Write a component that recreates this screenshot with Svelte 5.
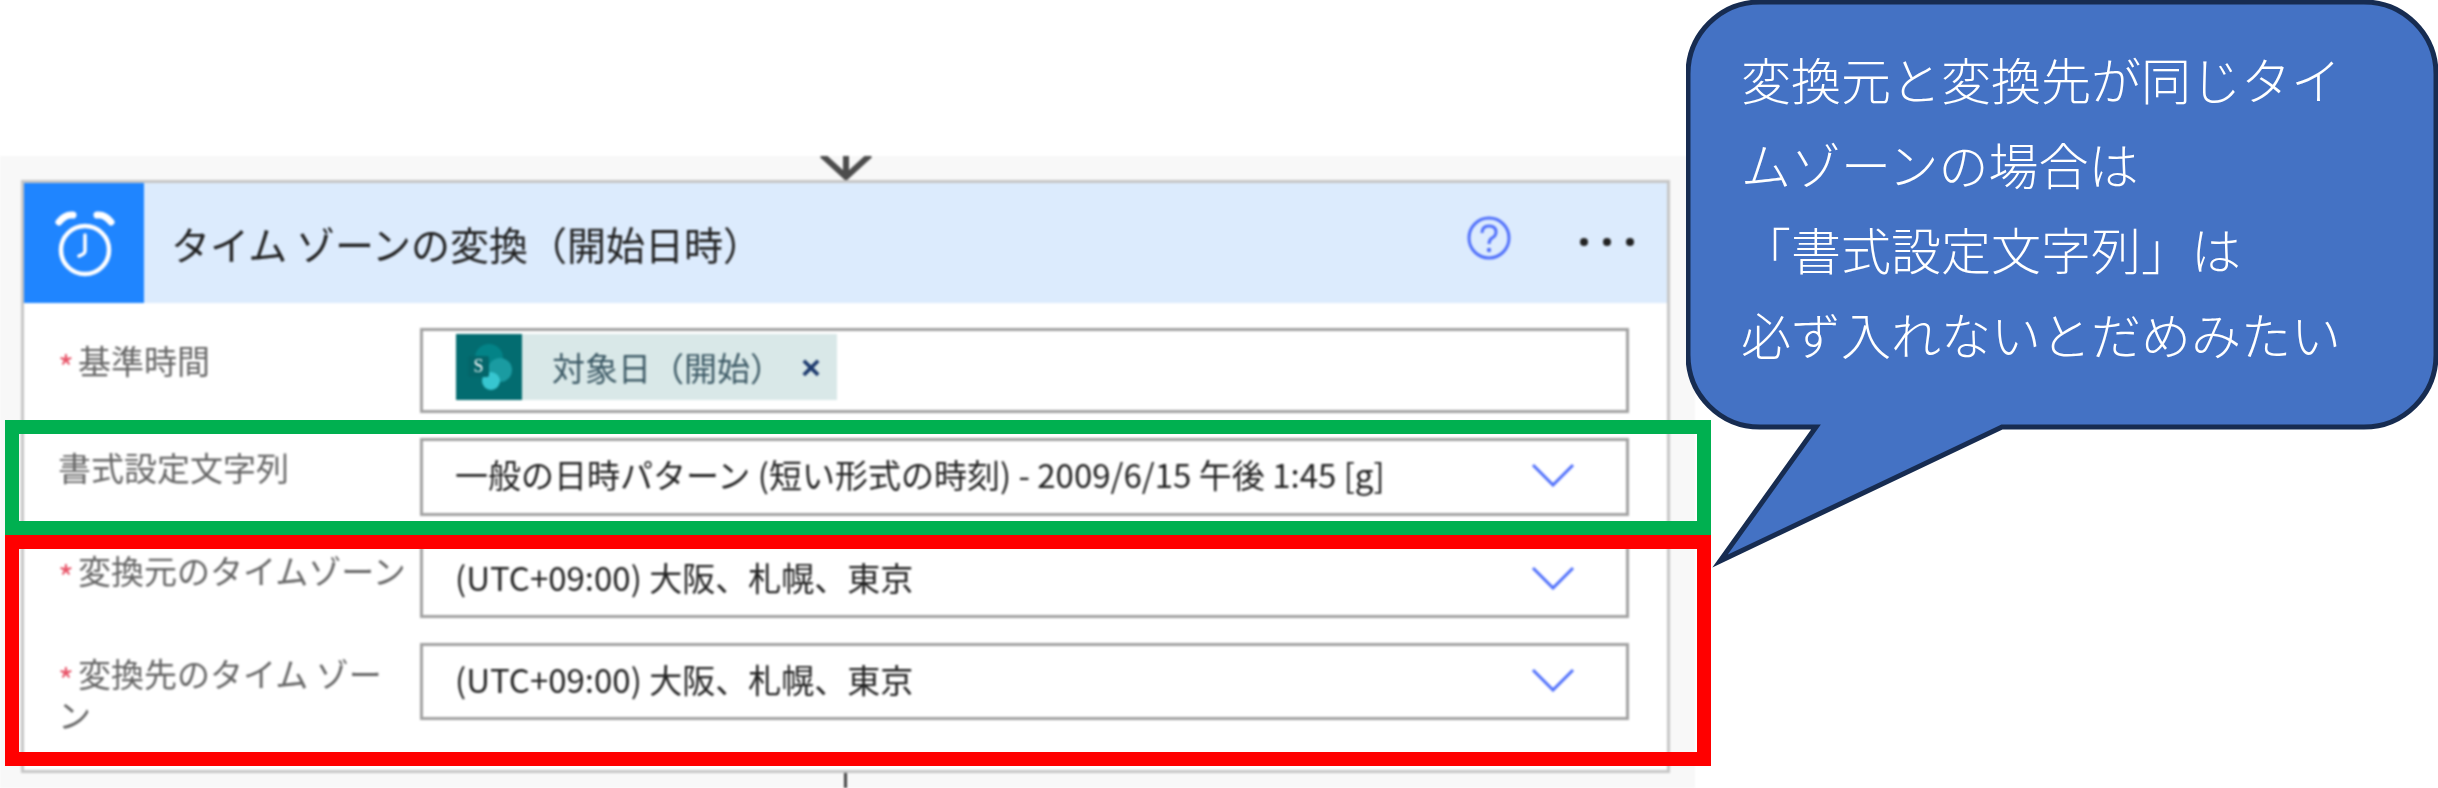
<script lang="ts">
  const fields = [
    { label: '基準時間', required: true, kind: 'token', height: 85, labelTop: 12 },
    { label: '書式設定文字列', required: false, kind: 'select', height: 78, labelTop: 9, value: '一般の日時パターン (短い形式の時刻) - 2009/6/15 午後 1:45 [g]' },
    { label: '変換元のタイムゾーン', required: true, kind: 'select', height: 77, labelTop: 9, value: '(UTC+09:00) 大阪、札幌、東京' },
    { label: '変換先のタイム ゾーン', required: true, kind: 'select', height: 77, labelTop: 10, value: '(UTC+09:00) 大阪、札幌、東京' },
  ]

  const note = ['変換元と変換先が同じタイ', 'ムゾーンの場合は', '「書式設定文字列」は', '必ず入れないとだめみたい']
</script>

<div class="page">
  <div class="canvas">
    <svg class="arrow" width="54" height="24" viewBox="0 0 54 24" aria-hidden="true">
      <path d="M3 -1L27 21L51 -1M27 0V21" fill="none" stroke="#4c4c4c" stroke-width="6" />
    </svg>

    <section class="card">
      <header class="card-head">
        <div class="head-icon">
          <svg width="64" height="70" viewBox="0 0 64 70" fill="none" stroke="#fff" aria-hidden="true">
            <circle cx="33" cy="42" r="24" stroke-width="4.5" />
            <path d="M33 27V43Q33 46 27 48" stroke-width="3.5" stroke-linecap="round" />
            <path d="M7 14Q13 6 21 7M59 14Q53 6 45 7" stroke-width="7" stroke-linecap="round" />
          </svg>
        </div>
        <h2 class="card-title">タイム ゾーンの変換（開始日時）</h2>
        <svg class="help" width="44" height="44" viewBox="0 0 44 44" fill="none" aria-hidden="true">
          <circle cx="22" cy="22" r="20" stroke="#4f6ffb" stroke-width="3" />
          <path d="M15 17Q15 10 22 10Q29 10 29 16Q29 20 25 22Q22 24 22 28" stroke="#4f6ffb" stroke-width="3" />
          <circle cx="22" cy="34" r="2.2" fill="#4f6ffb" />
        </svg>
        <div class="more">
          <span></span><span></span><span></span>
        </div>
      </header>

      <div class="card-body">
        {#each fields as field}
          <div class="label" style="padding-top: {field.labelTop}px">
            {#if field.required}<span class="star">*</span>{/if}{field.label}
          </div>
          <div class="input" style="height: {field.height}px">
            {#if field.kind === 'token'}
              <div class="token">
                <div class="token-icon">
                  <svg width="66" height="66" viewBox="0 0 66 66" aria-hidden="true">
                    <circle cx="33" cy="24" r="14" fill="#038387" />
                    <circle cx="44" cy="36" r="12" fill="#1a9ba1" />
                    <circle cx="35" cy="47" r="9" fill="#37c6d0" />
                    <rect x="12" y="22" width="21" height="21" rx="2" fill="#04666a" />
                    <text x="22.5" y="38" text-anchor="middle" class="s-letter">S</text>
                  </svg>
                </div>
                <span class="token-text">対象日（開始）</span>
                <span class="token-x">×</span>
              </div>
            {:else}
              <span class="value">{field.value}</span>
              <svg class="chevron" width="44" height="24" viewBox="0 0 44 24" aria-hidden="true">
                <path d="M2 2L22 22L42 2" fill="none" stroke="#4f6ffb" stroke-width="3" />
              </svg>
            {/if}
          </div>
        {/each}
      </div>
    </section>

    <div class="line"></div>
  </div>

  <div class="mark mark-green"></div>
  <div class="mark mark-red"></div>

  <div class="bubble">
    <svg width="752" height="575" viewBox="0 0 752 575" aria-hidden="true">
      <path
        d="M74 2H678A72 72 0 0 1 750 74V355A72 72 0 0 1 678 427H316L34 561L130 427H74A72 72 0 0 1 2 355V74A72 72 0 0 1 74 2Z"
        fill="#4472c4"
        stroke="#172c51"
        stroke-width="5"
      />
    </svg>
    <div class="bubble-text">
      {#each note as line}
        <div>{line}</div>
      {/each}
    </div>
  </div>
</div>

<style>
  :global(body) {
    margin: 0;
    background: #fff;
  }

  .page {
    position: relative;
    width: 2438px;
    height: 788px;
    overflow: hidden;
    padding-top: 156px;
    box-sizing: border-box;
    font-family: "Noto Sans CJK JP", "Noto Sans", sans-serif;
  }

  .canvas {
    width: 1695px;
    height: 632px;
    box-sizing: border-box;
    padding-left: 21px;
    padding-right: 25px;
    background: #f8f8f8;
    display: flex;
    flex-direction: column;
    align-items: center;
    filter: blur(0.8px);
  }

  .arrow {
    flex-shrink: 0;
    display: block;
  }

  .card {
    width: 100%;
    height: 593px;
    flex-shrink: 0;
    box-sizing: border-box;
    border: 3px solid #c6c6c6;
    background: #fff;
  }

  .card-head {
    height: 120px;
    display: flex;
    align-items: center;
    background: #dcebfd;
  }

  .head-icon {
    width: 120px;
    height: 120px;
    background: #1f85ff;
    display: flex;
    align-items: center;
    justify-content: center;
  }

  .card-title {
    margin: 0 0 0 27px;
    flex: 1;
    font-size: 39px;
    font-weight: 400;
    color: #222;
    white-space: nowrap;
  }

  .help {
    margin-top: -10px;
    margin-right: 69px;
  }

  .more {
    display: flex;
    gap: 15px;
    margin-top: -3px;
    margin-right: 33px;
  }

  .more span {
    width: 8px;
    height: 8px;
    border-radius: 50%;
    background: #222;
  }

  .card-body {
    display: grid;
    grid-template-columns: 362px 1209px;
    column-gap: 0;
    row-gap: 25px;
    padding: 25px 38px 0 34px;
  }

  .label {
    font-size: 33px;
    line-height: 41px;
    color: #666;
    padding-right: 9px;
  }

  .star {
    display: inline-block;
    width: 20px;
    color: #e8566a;
    font-size: 34px;
    line-height: 20px;
    vertical-align: -7px;
  }

  .input {
    box-sizing: border-box;
    border: 3px solid #a2a2a2;
    background: #fff;
    display: flex;
    align-items: center;
    padding-left: 32px;
    padding-right: 51px;
    font-size: 33px;
    color: #222;
  }

  .value {
    flex: 1;
    white-space: nowrap;
    margin-top: -6px;
  }

  .chevron {
    flex-shrink: 0;
    margin-top: -4px;
  }

  .token {
    display: flex;
    align-items: center;
    width: 381px;
    height: 66px;
    background: #d9e8e8;
    margin-left: 1px;
    margin-top: -7px;
    color: #3d5a66;
  }

  .token-icon {
    width: 66px;
    height: 66px;
    background: #036c70;
    flex-shrink: 0;
  }

  .token-icon svg {
    display: block;
  }

  .s-letter {
    font-family: "Liberation Serif", serif;
    font-size: 18px;
    fill: #fff;
  }

  .token-text {
    margin-left: 30px;
    font-size: 33px;
    white-space: nowrap;
  }

  .token-x {
    margin-left: 18px;
    font-family: "Liberation Sans", sans-serif;
    font-size: 34px;
    font-weight: 700;
    line-height: 40px;
    color: #1d3a6e;
  }

  .mark {
    position: absolute;
    box-sizing: border-box;
    left: 5px;
    width: 1706px;
    border-width: 14px;
    border-style: solid;
  }

  .mark-green {
    top: 420px;
    height: 115px;
    border-color: #00b050;
  }

  .mark-red {
    top: 535px;
    height: 231px;
    border-color: #f00;
  }

  .line {
    width: 3px;
    height: 15px;
    flex-shrink: 0;
    background: #444;
  }

  .bubble {
    position: absolute;
    left: 1686px;
    top: 0;
    width: 752px;
    height: 575px;
  }

  .bubble svg {
    position: absolute;
    left: 0;
    top: 0;
  }

  .bubble-text {
    position: absolute;
    left: 55px;
    top: 36px;
    font-size: 50px;
    line-height: 85px;
    font-weight: 300;
    color: #fff;
    white-space: nowrap;
  }
</style>
